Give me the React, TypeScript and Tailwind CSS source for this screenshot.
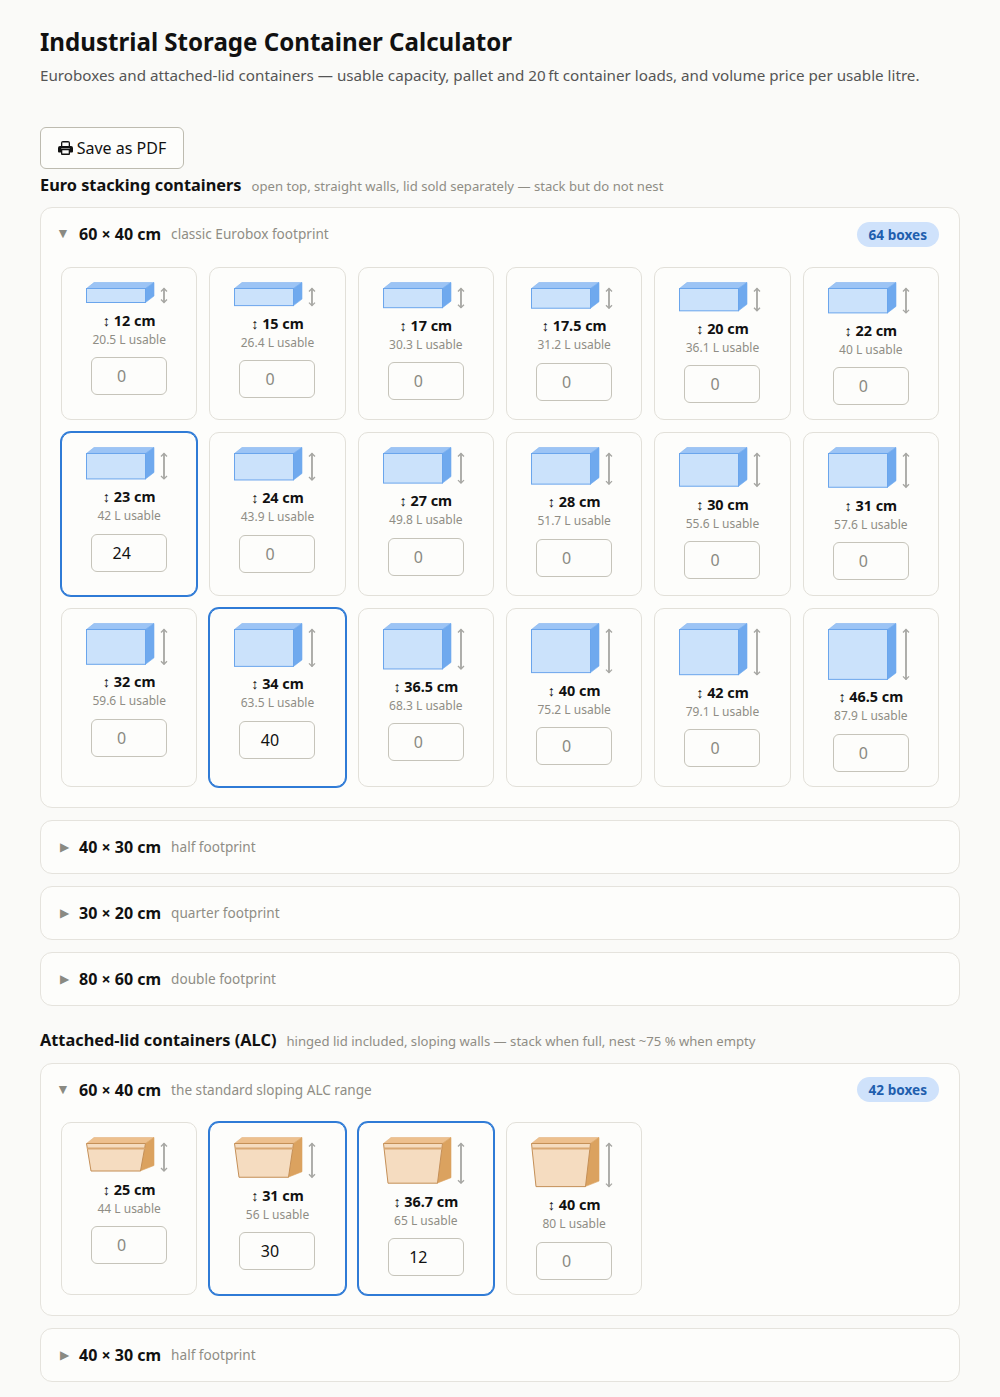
import React from "react";

type Item = { cm: number; label: string; litres: string; value?: number };

const euro: Item[] = [
  { cm: 12, label: "12 cm", litres: "20.5 L usable" },
  { cm: 15, label: "15 cm", litres: "26.4 L usable" },
  { cm: 17, label: "17 cm", litres: "30.3 L usable" },
  { cm: 17.5, label: "17.5 cm", litres: "31.2 L usable" },
  { cm: 20, label: "20 cm", litres: "36.1 L usable" },
  { cm: 22, label: "22 cm", litres: "40 L usable" },
  { cm: 23, label: "23 cm", litres: "42 L usable", value: 24 },
  { cm: 24, label: "24 cm", litres: "43.9 L usable" },
  { cm: 27, label: "27 cm", litres: "49.8 L usable" },
  { cm: 28, label: "28 cm", litres: "51.7 L usable" },
  { cm: 30, label: "30 cm", litres: "55.6 L usable" },
  { cm: 31, label: "31 cm", litres: "57.6 L usable" },
  { cm: 32, label: "32 cm", litres: "59.6 L usable" },
  { cm: 34, label: "34 cm", litres: "63.5 L usable", value: 40 },
  { cm: 36.5, label: "36.5 cm", litres: "68.3 L usable" },
  { cm: 40, label: "40 cm", litres: "75.2 L usable" },
  { cm: 42, label: "42 cm", litres: "79.1 L usable" },
  { cm: 46.5, label: "46.5 cm", litres: "87.9 L usable" },
];

const alc: Item[] = [
  { cm: 25, label: "25 cm", litres: "44 L usable" },
  { cm: 31, label: "31 cm", litres: "56 L usable", value: 30 },
  { cm: 36.7, label: "36.7 cm", litres: "65 L usable", value: 12 },
  { cm: 40, label: "40 cm", litres: "80 L usable" },
];

const height = (cm: number) => 1.04 * cm + 1.52;

function Printer() {
  return (
    <svg width="15" height="14" viewBox="0 0 15 14" className="block shrink-0">
      <path
        fill="#111111"
        fillRule="evenodd"
        d="M3 5V2a2 2 0 0 1 2-2h5a2 2 0 0 1 2 2v3h1a2 2 0 0 1 2 2v3.5a1 1 0 0 1-1 1h-2V13a1 1 0 0 1-1 1H4a1 1 0 0 1-1-1v-1.5H1a1 1 0 0 1-1-1V7a2 2 0 0 1 2-2h1zM4.3 1.4V5h6.4V1.4H4.3zM4.3 9.2v3.4h6.4V9.2H4.3zM3.2 7.2h8.6v.6H3.2z"
      />
    </svg>
  );
}

function Arrow({ h }: { h: number }) {
  const top = 6.5;
  const bottom = top + h;
  return (
    <g fill="none" stroke="#a6a6a2" strokeWidth="1.3">
      <line x1="78" y1={top} x2="78" y2={bottom} strokeWidth="1.8" />
      <polyline points={`75,${top + 3} 78,${top} 81,${top + 3}`} />
      <polyline points={`75,${bottom - 3} 78,${bottom} 81,${bottom - 3}`} />
    </g>
  );
}

function EuroBox({ cm }: { cm: number }) {
  const h = height(cm);
  const b = 6.5 + h;
  return (
    <svg width="86" height={b + 1} viewBox={`0 0 86 ${b + 1}`} className="block shrink-0">
      <polygon points={`0.5,6.5 8,0.5 68,0.5 59.5,6.5`} fill="#9cc4f5" stroke="#85b5f0" strokeWidth="0.6" />
      <polygon points={`59.5,6.5 68,0.5 68,${b - 6.5} 59.5,${b}`} fill="#6fa9ee" stroke="#6fa9ee" strokeWidth="0.6" />
      <rect x="0.5" y="6.5" width="59" height={h} fill="#cbe2fb" stroke="#6aa5ec" strokeWidth="1" />
      <Arrow h={h} />
    </svg>
  );
}

function AlcBox({ cm }: { cm: number }) {
  const h = height(cm);
  const b = 6.5 + h;
  return (
    <svg width="86" height={b + 1} viewBox={`0 0 86 ${b + 1}`} className="block shrink-0">
      <polygon points={`0.5,6.5 8,0.5 68,0.5 59.5,6.5`} fill="#edc08e" stroke="#e4b582" strokeWidth="0.6" />
      <polygon points={`59.5,6.5 68,0.5 68,${b - 5.5} 54,${b}`} fill="#dba25f" stroke="#dba25f" strokeWidth="0.6" />
      <polygon points={`0.5,6.5 59.5,6.5 54.5,${b} 5,${b}`} fill="#f5dcc0" stroke="#c48f56" strokeWidth="1" />
      <rect x="1" y="10.5" width="58" height="2" fill="#d9a873" />
      <Arrow h={h} />
    </svg>
  );
}

function Card({ item, alcType }: { item: Item; alcType?: boolean }) {
  const selected = item.value !== undefined;
  return (
    <div
      className={
        selected
          ? "flex flex-col items-center rounded-[10px] border border-[#2f7bd6] bg-[#fdfdfb] px-3 py-[14px] shadow-[0_0_0_1px_#2f7bd6]"
          : "flex flex-col items-center rounded-[10px] border border-[#e2e0d9] bg-[#fdfdfb] px-3 py-[14px]"
      }
    >
      {alcType ? <AlcBox cm={item.cm} /> : <EuroBox cm={item.cm} />}
      <div className="mt-[7px] text-[14.4px] leading-[20px] font-bold text-[#111111]">↕ {item.label}</div>
      <div className="mt-[1px] text-[12px] leading-[16px] text-[#8f8d85]">{item.litres}</div>
      <input
        type="number"
        readOnly
        placeholder="0"
        defaultValue={item.value}
        className="mt-[9.5px] h-[38px] w-[76px] rounded-[6px] border border-[#c6c4ba] bg-[#fdfdfb] px-[8px] text-center text-[16px] text-[#111111] placeholder:text-[#8a8a82]"
      />
    </div>
  );
}

function Open({ name, note, badge, items, alcType }: { name: string; note: string; badge: string; items: Item[]; alcType?: boolean }) {
  return (
    <section className="rounded-[12px] border border-[#e5e3dd] bg-[#fdfdfb] px-5 pt-[14px] pb-5">
      <div className="flex h-[24px] items-center">
        <span className="-mt-[2px] -ml-[5px] w-[23px] shrink-0 text-[14px] leading-none text-[#8a8a82]">▼</span>
        <span className="text-[16px] font-bold text-[#111111]">{name}</span>
        <span className="ml-[10px] text-[13.6px] text-[#8f8d85]">{note}</span>
        <span className="ml-auto rounded-full bg-[#cfe2fb] px-3 text-[13.6px] leading-[25px] font-bold text-[#1f5fae]">{badge}</span>
      </div>
      <div
        className={
          alcType
            ? "mt-[20.6px] grid grid-cols-6 grid-rows-[173px] gap-3"
            : "mt-[21px] grid grid-cols-6 grid-rows-[153.3px_163.6px_179px] gap-3"
        }
      >
        {items.map((it) => (
          <Card key={it.label} item={it} alcType={alcType} />
        ))}
      </div>
    </section>
  );
}

function Closed({ name, note }: { name: string; note: string }) {
  return (
    <section className="flex h-[54px] items-center rounded-[12px] border border-[#e5e3dd] bg-[#fdfdfb] px-5">
      <span className="-ml-[1px] w-[19px] shrink-0 text-[12px] leading-none text-[#8a8a82]">▶</span>
      <span className="text-[16px] font-bold text-[#111111]">{name}</span>
      <span className="ml-[10px] text-[13.6px] text-[#8f8d85]">{note}</span>
    </section>
  );
}

export default function App() {
  return (
    <div className="min-h-[1397px] bg-[#fafaf8] px-10 pt-[26px] font-['Noto_Sans',sans-serif] text-[#111111]">
      <h1 className="text-[24.1px] leading-[32px] font-bold">Industrial Storage Container Calculator</h1>
      <p className="mt-[6px] text-[15.2px] leading-[22px] text-[#555555]">
        Euroboxes and attached-lid containers — usable capacity, pallet and 20{"\u202f"}ft container loads, and volume price per usable litre.
      </p>
      <button className="mt-[41px] flex h-[42px] w-[144px] items-center justify-center gap-[4px] rounded-[6px] border border-[#bdbbb0] bg-[#fdfdfb] text-[16px] text-[#111111]">
        <Printer />
        Save as PDF
      </button>
      <div className="mt-[4px] flex h-[24px] items-baseline gap-[10px]">
        <h2 className="text-[16.32px] font-bold">Euro stacking containers</h2>
        <span className="text-[13.12px] text-[#8f8d85]">open top, straight walls, lid sold separately — stack but do not nest</span>
      </div>
      <div className="mt-[10px] flex flex-col gap-3">
        <Open name="60 × 40 cm" note="classic Eurobox footprint" badge="64 boxes" items={euro} />
        <Closed name="40 × 30 cm" note="half footprint" />
        <Closed name="30 × 20 cm" note="quarter footprint" />
        <Closed name="80 × 60 cm" note="double footprint" />
      </div>
      <div className="mt-[22px] flex h-[24px] items-baseline gap-[10px]">
        <h2 className="text-[16.32px] font-bold">Attached-lid containers (ALC)</h2>
        <span className="text-[13.12px] text-[#8f8d85]">hinged lid included, sloping walls — stack when full, nest ~75{"\u00a0"}% when empty</span>
      </div>
      <div className="mt-[11px] flex flex-col gap-3">
        <Open name="60 × 40 cm" note="the standard sloping ALC range" badge="42 boxes" items={alc} alcType />
        <Closed name="40 × 30 cm" note="half footprint" />
      </div>
    </div>
  );
}
